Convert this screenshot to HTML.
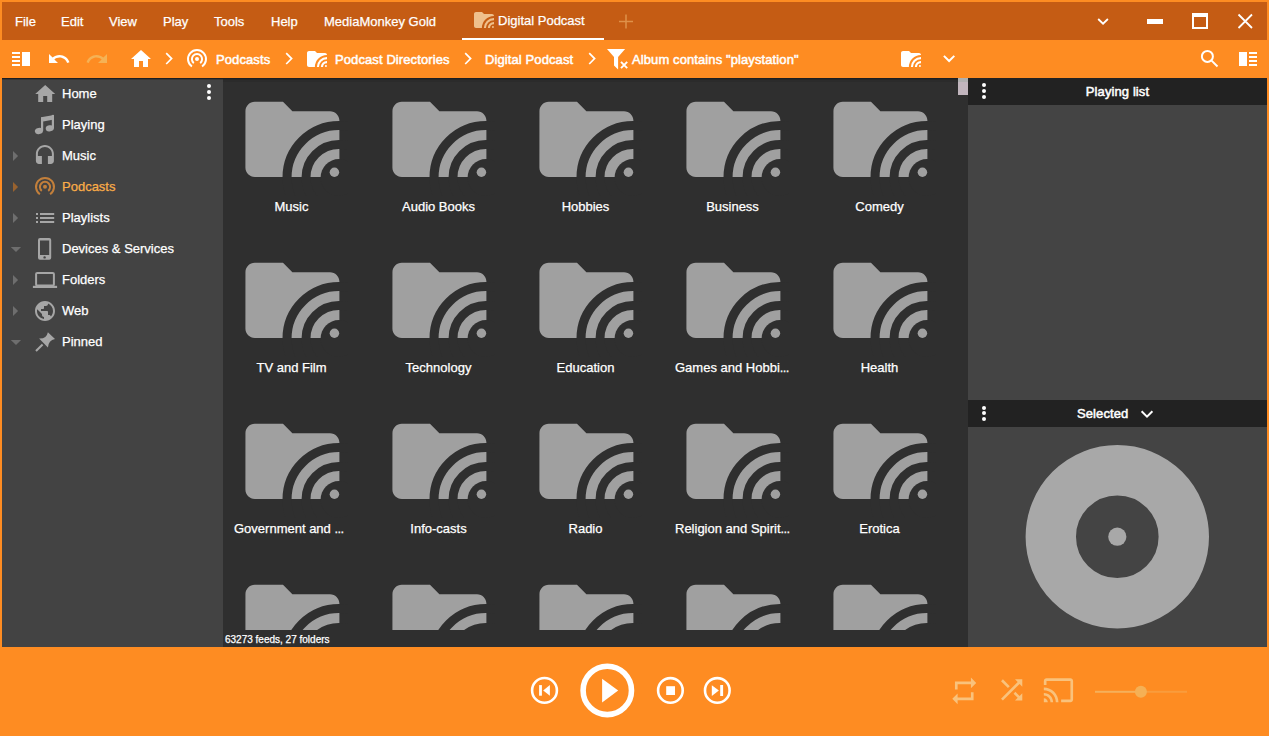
<!DOCTYPE html><html><head><meta charset="utf-8"><style>
*{margin:0;padding:0;box-sizing:border-box}
html,body{width:1269px;height:736px;overflow:hidden;background:#fe8c22;font-family:"Liberation Sans",sans-serif;color:#fff}
.a{position:absolute}
.menu,.nav,.lbl,.st{-webkit-text-stroke:0.25px currentColor}
svg{position:absolute;overflow:visible}
#title{left:2px;top:2px;width:1265px;height:38px;background:#c55c14}
.menu{position:absolute;top:12px;font-size:13px;line-height:15px;color:#fff;white-space:nowrap}
.tb{position:absolute;top:52px;font-size:13px;line-height:15px;letter-spacing:0.1px;-webkit-text-stroke:0.5px #fff;color:#fff;white-space:nowrap}
#left{left:2px;top:78px;width:221px;height:569px;background:#434343}
.nav{position:absolute;left:60px;font-size:13px;line-height:15px;color:#fff;white-space:nowrap}
#grid{left:223px;top:78px;width:745px;height:552px;background:#2f2f2f;overflow:hidden}
#status{left:223px;top:630px;width:745px;height:17px;background:#2f2f2f}
#right{left:968px;top:78px;width:299px;height:569px;background:#444}
.hdr{position:absolute;left:0;width:299px;height:27px;background:#222}
.item{position:absolute;width:147px;height:161px}
.item svg{left:12.6px;top:5px}
.lbl{position:absolute;left:-5px;width:147px;top:121px;text-align:center;font-size:13px;line-height:15px;color:#fff;white-space:nowrap}
</style></head><body>
<div id="title" class="a">
<div class="menu" style="left:13px">File</div>
<div class="menu" style="left:59px">Edit</div>
<div class="menu" style="left:107px">View</div>
<div class="menu" style="left:161px">Play</div>
<div class="menu" style="left:212px">Tools</div>
<div class="menu" style="left:269px">Help</div>
<div class="menu" style="left:322px">MediaMonkey Gold</div>
<svg style="left:470.3px;top:5.9px;overflow:hidden" width="24" height="24" viewBox="0 0 24 24"><path fill="#efc08c" d="M10 4H4c-1.1 0-1.99.9-1.99 2L2 18c0 1.1.9 2 2 2h16c1.1 0 2-.9 2-2V8c0-1.1-.9-2-2-2h-8l-2-2z"/><circle cx="21.91" cy="20.09" r="11.05" fill="none" stroke="#c55c14" stroke-width="1.93"/><circle cx="21.91" cy="20.09" r="7.01" fill="none" stroke="#c55c14" stroke-width="1.9"/><circle cx="21.91" cy="20.09" r="3.91" fill="#c55c14"/><circle cx="20.94" cy="18.99" r="1.01" fill="#efc08c"/></svg>
<div class="menu" style="left:496px;top:11px">Digital Podcast</div>
<div class="a" style="left:460px;top:36px;width:142px;height:2px;background:#fff"></div>
<svg style="left:615px;top:10px" width="20" height="20"><path d="M2 9.5H16M9 2.5V16.5" stroke="rgba(255,210,140,0.45)" stroke-width="1.5"/></svg>
<svg style="left:1088px;top:8px" width="20" height="16"><path d="M8.2 9 L13.05 13.7 L17.9 9" fill="none" stroke="#fff" stroke-width="1.8"/></svg>
<div class="a" style="left:1145px;top:16.5px;width:16px;height:5px;background:#fff"></div>
<div class="a" style="left:1190px;top:11px;width:16px;height:16px;border:2px solid #fff;border-top-width:4px"></div>
<svg style="left:1233px;top:9px" width="20" height="20"><path d="M3.5 3.5 L17 17 M17 3.5 L3.5 17" stroke="#fff" stroke-width="1.8"/></svg>
</div>
<div class="a" style="left:12px;top:52px;width:8px;height:2px;background:#fff"></div><div class="a" style="left:12px;top:56px;width:8px;height:2px;background:#fff"></div><div class="a" style="left:12px;top:60px;width:8px;height:2px;background:#fff"></div><div class="a" style="left:12px;top:64px;width:8px;height:2px;background:#fff"></div><div class="a" style="left:22px;top:52px;width:8px;height:14px;background:#fff"></div>
<svg style="left:47px;top:47px" width="24" height="24" viewBox="0 0 24 24"><path fill="#fff" d="M12.5 8c-2.65 0-5.05.99-6.9 2.6L2 7v9h9l-3.62-3.62c1.39-1.16 3.16-1.88 5.12-1.88 3.54 0 6.55 2.31 7.6 5.5l2.37-.78C21.08 11.03 17.15 8 12.5 8z"/></svg>
<svg style="left:84.8px;top:47px" width="24" height="24" viewBox="0 0 24 24"><path fill="#f5b255" d="M18.4 10.6C16.55 8.99 14.15 8 11.5 8c-4.65 0-8.58 3.03-9.96 7.22L3.9 16c1.05-3.19 4.05-5.5 7.6-5.5 1.95 0 3.73.72 5.12 1.88L13 16h9V7l-3.6 3.6z"/></svg>
<svg style="left:129px;top:47px" width="24" height="24" viewBox="0 0 24 24"><path fill="#fff" d="M10 20v-6h4v6h5v-8h3L12 3 2 12h3v8z"/></svg>
<svg style="left:165px;top:52px" width="10" height="14"><path d="M1.2 1.2 L6.6 6.6 L1.2 12" fill="none" stroke="#fff" stroke-width="1.7"/></svg>
<svg style="left:185px;top:47px" width="24" height="24" viewBox="0 0 24 24">
<path d="M6.9 19.5 A9 9 0 1 1 17.1 19.5" fill="none" stroke="#fff" stroke-width="2"/>
<path d="M8.8 16.1 A5.1 5.1 0 1 1 15.2 16.1" fill="none" stroke="#fff" stroke-width="2"/>
<circle cx="12" cy="12" r="2" fill="#fff"/></svg>
<div class="tb" style="left:216px">Podcasts</div>
<svg style="left:285px;top:52px" width="10" height="14"><path d="M1.2 1.2 L6.6 6.6 L1.2 12" fill="none" stroke="#fff" stroke-width="1.7"/></svg>
<svg style="left:305px;top:47px;overflow:hidden" width="24" height="24" viewBox="0 0 24 24"><path fill="#fff" d="M10 4H4c-1.1 0-1.99.9-1.99 2L2 18c0 1.1.9 2 2 2h16c1.1 0 2-.9 2-2V8c0-1.1-.9-2-2-2h-8l-2-2z"/><circle cx="21.91" cy="20.09" r="11.05" fill="none" stroke="#fe8c22" stroke-width="1.93"/><circle cx="21.91" cy="20.09" r="7.01" fill="none" stroke="#fe8c22" stroke-width="1.9"/><circle cx="21.91" cy="20.09" r="3.91" fill="#fe8c22"/><circle cx="20.94" cy="18.99" r="1.01" fill="#fff"/></svg>
<div class="tb" style="left:335px">Podcast Directories</div>
<svg style="left:464px;top:52px" width="10" height="14"><path d="M1.2 1.2 L6.6 6.6 L1.2 12" fill="none" stroke="#fff" stroke-width="1.7"/></svg>
<div class="tb" style="left:485px">Digital Podcast</div>
<svg style="left:588px;top:52px" width="10" height="14"><path d="M1.2 1.2 L6.6 6.6 L1.2 12" fill="none" stroke="#fff" stroke-width="1.7"/></svg>
<svg style="left:600px;top:44px" width="32" height="30"><path fill="#fff" d="M7 5H25.1L18.1 13V25.4L14 21.6V13Z"/><path d="M21 17.8L27.2 24.2M27.2 17.8L21 24.2" stroke="#fff" stroke-width="1.9"/></svg>
<div class="tb" style="left:632px">Album contains "playstation"</div>
<svg style="left:899px;top:47px;overflow:hidden" width="24" height="24" viewBox="0 0 24 24"><path fill="#fff" d="M10 4H4c-1.1 0-1.99.9-1.99 2L2 18c0 1.1.9 2 2 2h16c1.1 0 2-.9 2-2V8c0-1.1-.9-2-2-2h-8l-2-2z"/><circle cx="21.91" cy="20.09" r="11.05" fill="none" stroke="#fe8c22" stroke-width="1.93"/><circle cx="21.91" cy="20.09" r="7.01" fill="none" stroke="#fe8c22" stroke-width="1.9"/><circle cx="21.91" cy="20.09" r="3.91" fill="#fe8c22"/><circle cx="20.94" cy="18.99" r="1.01" fill="#fff"/></svg>
<svg style="left:940px;top:52px" width="18" height="14"><path d="M3.9 3.9 L9.1 9 L14.3 3.9" fill="none" stroke="#fff" stroke-width="2"/></svg>
<svg style="left:1198px;top:47px" width="24" height="24"><circle cx="9.4" cy="9.4" r="5.5" fill="none" stroke="#fff" stroke-width="2"/><path d="M13.6 13.6 L19.5 19.5" stroke="#fff" stroke-width="2"/></svg>
<div class="a" style="left:1239px;top:52px;width:8px;height:14px;background:#fff"></div><div class="a" style="left:1249px;top:52px;width:8px;height:2px;background:#fff"></div><div class="a" style="left:1249px;top:56px;width:8px;height:2px;background:#fff"></div><div class="a" style="left:1249px;top:60px;width:8px;height:2px;background:#fff"></div><div class="a" style="left:1249px;top:64px;width:8px;height:2px;background:#fff"></div>
<div id="left" class="a">
<div class="a" style="left:0;top:0;width:221px;height:1px;background:#1c1e22"></div><div class="a" style="left:0;top:1px;width:221px;height:1px;background:#353535"></div>
<div class="a" style="left:204.8px;top:5.8px;width:4.4px;height:4.4px;border-radius:50%;background:#fff"></div>
<div class="a" style="left:204.8px;top:11.8px;width:4.4px;height:4.4px;border-radius:50%;background:#fff"></div>
<div class="a" style="left:204.8px;top:17.8px;width:4.4px;height:4.4px;border-radius:50%;background:#fff"></div>
<div class="nav" style="top:8px;color:#fff">Home</div>
<div class="nav" style="top:39px;color:#fff">Playing</div>
<div class="nav" style="top:70px;color:#fff">Music</div>
<div class="nav" style="top:101px;color:#fbad48">Podcasts</div>
<div class="nav" style="top:132px;color:#fff">Playlists</div>
<div class="nav" style="top:163px;color:#fff">Devices &amp; Services</div>
<div class="nav" style="top:194px;color:#fff">Folders</div>
<div class="nav" style="top:225px;color:#fff">Web</div>
<div class="nav" style="top:256px;color:#fff">Pinned</div>
</div>
<svg style="left:0;top:0" width="223" height="360">
<path fill="#a6a6a6" transform="translate(33.2 81.9)" d="M10 20v-6h4v6h5v-8h3L12 3 2 12h3v8z"/>
<g fill="#a6a6a6">
 <path d="M41 117.3 L54 114.9 V119.5 L43.2 121.5 Z"/>
 <rect x="41" y="117.3" width="2.2" height="13.5"/>
 <rect x="51.8" y="114.9" width="2.2" height="13.5"/>
 <ellipse cx="38.9" cy="131" rx="4.1" ry="3" transform="rotate(-12 38.9 131)"/>
 <ellipse cx="49.8" cy="128.3" rx="4.1" ry="3" transform="rotate(-12 49.8 128.3)"/>
</g>
<path fill="#a6a6a6" transform="translate(32.9 143.9)" d="M12 1c-4.97 0-9 4.03-9 9v7c0 1.66 1.34 3 3 3h3v-8H5v-2c0-3.87 3.13-7 7-7s7 3.13 7 7v2h-4v8h3c1.66 0 3-1.34 3-3v-7c0-4.97-4.03-9-9-9z"/>
<g transform="translate(33 174.8)" stroke="#d98a3a" fill="none" stroke-width="2" opacity="0.85">
 <path d="M6.9 19.5 A9 9 0 1 1 17.1 19.5"/>
 <path d="M8.8 16.1 A5.1 5.1 0 1 1 15.2 16.1"/>
 <circle cx="12" cy="12" r="2" fill="#d98a3a" stroke="none"/>
</g>
<g fill="#a6a6a6">
 <rect x="36" y="213" width="2" height="2"/><rect x="40" y="213" width="14.2" height="2"/>
 <rect x="36" y="217" width="2" height="2"/><rect x="40" y="217" width="14.2" height="2"/>
 <rect x="36" y="221" width="2" height="2"/><rect x="40" y="221" width="14.2" height="2"/>
</g>
<path fill="#a6a6a6" fill-rule="evenodd" d="M40 238 H49.2 A2 2 0 0 1 51.2 240 V257.8 A2 2 0 0 1 49.2 259.8 H40 A2 2 0 0 1 38 257.8 V240 A2 2 0 0 1 40 238 Z M40 240.5 V255 H49.2 V240.5 Z"/>
<circle cx="44.6" cy="257.4" r="1.2" fill="#434343"/>
<rect x="36.1" y="272.9" width="17.8" height="12.7" rx="1.2" fill="none" stroke="#a6a6a6" stroke-width="2"/>
<rect x="32.9" y="285.8" width="24.2" height="2.2" fill="#a6a6a6"/>
<path fill="#a6a6a6" transform="translate(33 299)" d="M12 2C6.48 2 2 6.48 2 12s4.48 10 10 10 10-4.48 10-10S17.52 2 12 2zm-1 17.93c-3.950-.49-7-3.85-7-7.93 0-.62.08-1.21.21-1.79L9 15v1c0 1.1.9 2 2 2v1.93zm6.9-2.540c-.26-.81-1-1.39-1.9-1.39h-1v-3c0-.55-.45-1-1-1H8v-2h2c.55 0 1-.45 1-1V7h2c1.1 0 2-.9 2-2v-.41c2.93 1.19 5 4.06 5 7.41 0 2.08-.8 3.97-2.1 5.39z"/>
<path fill="#a6a6a6" d="M47.9 332.2 L55 339 Q48.5 340.4 47.9 347.4 L39.1 338.6 Q46.5 339 47.9 332.2 Z"/>
<path d="M42.6 344.6 L36 351" stroke="#a6a6a6" stroke-width="2.1"/>
<g fill="#6e6e6e">
 <path d="M13 151 L18.1 156 L13 161Z"/>
 <path d="M13 182 L18.1 187 L13 192Z" fill="#98622f"/>
 <path d="M13 213 L18.1 218 L13 223Z"/>
 <path d="M10.8 247 L21.1 247 L16 252Z"/>
 <path d="M13 275 L18.1 280 L13 285Z"/>
 <path d="M13 306 L18.1 311 L13 316Z"/>
 <path d="M10.8 340 L21.1 340 L16 345Z"/>
</g>
</svg>
<div id="grid" class="a">
<div class="a" style="left:0;top:0;width:745px;height:1px;background:#1c1e22"></div><div class="a" style="left:0;top:1px;width:745px;height:1px;background:#252525"></div><div class="a" style="left:0;top:2px;width:745px;height:2px;background:#2b2b2b"></div>
<div class="item" style="left:0px;top:0px"><svg style="left:12.6px;top:5px;overflow:hidden" width="112.8" height="112.8" viewBox="0 0 24 24"><path fill="#a0a0a0" d="M10 4H4c-1.1 0-1.99.9-1.99 2L2 18c0 1.1.9 2 2 2h16c1.1 0 2-.9 2-2V8c0-1.1-.9-2-2-2h-8l-2-2z"/><circle cx="21.91" cy="20.09" r="11.05" fill="none" stroke="#2f2f2f" stroke-width="1.93"/><circle cx="21.91" cy="20.09" r="7.01" fill="none" stroke="#2f2f2f" stroke-width="1.9"/><circle cx="21.91" cy="20.09" r="3.91" fill="#2f2f2f"/><circle cx="20.94" cy="18.99" r="1.01" fill="#a0a0a0"/></svg><div class="lbl">Music</div></div>
<div class="item" style="left:147px;top:0px"><svg style="left:12.6px;top:5px;overflow:hidden" width="112.8" height="112.8" viewBox="0 0 24 24"><path fill="#a0a0a0" d="M10 4H4c-1.1 0-1.99.9-1.99 2L2 18c0 1.1.9 2 2 2h16c1.1 0 2-.9 2-2V8c0-1.1-.9-2-2-2h-8l-2-2z"/><circle cx="21.91" cy="20.09" r="11.05" fill="none" stroke="#2f2f2f" stroke-width="1.93"/><circle cx="21.91" cy="20.09" r="7.01" fill="none" stroke="#2f2f2f" stroke-width="1.9"/><circle cx="21.91" cy="20.09" r="3.91" fill="#2f2f2f"/><circle cx="20.94" cy="18.99" r="1.01" fill="#a0a0a0"/></svg><div class="lbl">Audio Books</div></div>
<div class="item" style="left:294px;top:0px"><svg style="left:12.6px;top:5px;overflow:hidden" width="112.8" height="112.8" viewBox="0 0 24 24"><path fill="#a0a0a0" d="M10 4H4c-1.1 0-1.99.9-1.99 2L2 18c0 1.1.9 2 2 2h16c1.1 0 2-.9 2-2V8c0-1.1-.9-2-2-2h-8l-2-2z"/><circle cx="21.91" cy="20.09" r="11.05" fill="none" stroke="#2f2f2f" stroke-width="1.93"/><circle cx="21.91" cy="20.09" r="7.01" fill="none" stroke="#2f2f2f" stroke-width="1.9"/><circle cx="21.91" cy="20.09" r="3.91" fill="#2f2f2f"/><circle cx="20.94" cy="18.99" r="1.01" fill="#a0a0a0"/></svg><div class="lbl">Hobbies</div></div>
<div class="item" style="left:441px;top:0px"><svg style="left:12.6px;top:5px;overflow:hidden" width="112.8" height="112.8" viewBox="0 0 24 24"><path fill="#a0a0a0" d="M10 4H4c-1.1 0-1.99.9-1.99 2L2 18c0 1.1.9 2 2 2h16c1.1 0 2-.9 2-2V8c0-1.1-.9-2-2-2h-8l-2-2z"/><circle cx="21.91" cy="20.09" r="11.05" fill="none" stroke="#2f2f2f" stroke-width="1.93"/><circle cx="21.91" cy="20.09" r="7.01" fill="none" stroke="#2f2f2f" stroke-width="1.9"/><circle cx="21.91" cy="20.09" r="3.91" fill="#2f2f2f"/><circle cx="20.94" cy="18.99" r="1.01" fill="#a0a0a0"/></svg><div class="lbl">Business</div></div>
<div class="item" style="left:588px;top:0px"><svg style="left:12.6px;top:5px;overflow:hidden" width="112.8" height="112.8" viewBox="0 0 24 24"><path fill="#a0a0a0" d="M10 4H4c-1.1 0-1.99.9-1.99 2L2 18c0 1.1.9 2 2 2h16c1.1 0 2-.9 2-2V8c0-1.1-.9-2-2-2h-8l-2-2z"/><circle cx="21.91" cy="20.09" r="11.05" fill="none" stroke="#2f2f2f" stroke-width="1.93"/><circle cx="21.91" cy="20.09" r="7.01" fill="none" stroke="#2f2f2f" stroke-width="1.9"/><circle cx="21.91" cy="20.09" r="3.91" fill="#2f2f2f"/><circle cx="20.94" cy="18.99" r="1.01" fill="#a0a0a0"/></svg><div class="lbl">Comedy</div></div>
<div class="item" style="left:0px;top:161px"><svg style="left:12.6px;top:5px;overflow:hidden" width="112.8" height="112.8" viewBox="0 0 24 24"><path fill="#a0a0a0" d="M10 4H4c-1.1 0-1.99.9-1.99 2L2 18c0 1.1.9 2 2 2h16c1.1 0 2-.9 2-2V8c0-1.1-.9-2-2-2h-8l-2-2z"/><circle cx="21.91" cy="20.09" r="11.05" fill="none" stroke="#2f2f2f" stroke-width="1.93"/><circle cx="21.91" cy="20.09" r="7.01" fill="none" stroke="#2f2f2f" stroke-width="1.9"/><circle cx="21.91" cy="20.09" r="3.91" fill="#2f2f2f"/><circle cx="20.94" cy="18.99" r="1.01" fill="#a0a0a0"/></svg><div class="lbl">TV and Film</div></div>
<div class="item" style="left:147px;top:161px"><svg style="left:12.6px;top:5px;overflow:hidden" width="112.8" height="112.8" viewBox="0 0 24 24"><path fill="#a0a0a0" d="M10 4H4c-1.1 0-1.99.9-1.99 2L2 18c0 1.1.9 2 2 2h16c1.1 0 2-.9 2-2V8c0-1.1-.9-2-2-2h-8l-2-2z"/><circle cx="21.91" cy="20.09" r="11.05" fill="none" stroke="#2f2f2f" stroke-width="1.93"/><circle cx="21.91" cy="20.09" r="7.01" fill="none" stroke="#2f2f2f" stroke-width="1.9"/><circle cx="21.91" cy="20.09" r="3.91" fill="#2f2f2f"/><circle cx="20.94" cy="18.99" r="1.01" fill="#a0a0a0"/></svg><div class="lbl">Technology</div></div>
<div class="item" style="left:294px;top:161px"><svg style="left:12.6px;top:5px;overflow:hidden" width="112.8" height="112.8" viewBox="0 0 24 24"><path fill="#a0a0a0" d="M10 4H4c-1.1 0-1.99.9-1.99 2L2 18c0 1.1.9 2 2 2h16c1.1 0 2-.9 2-2V8c0-1.1-.9-2-2-2h-8l-2-2z"/><circle cx="21.91" cy="20.09" r="11.05" fill="none" stroke="#2f2f2f" stroke-width="1.93"/><circle cx="21.91" cy="20.09" r="7.01" fill="none" stroke="#2f2f2f" stroke-width="1.9"/><circle cx="21.91" cy="20.09" r="3.91" fill="#2f2f2f"/><circle cx="20.94" cy="18.99" r="1.01" fill="#a0a0a0"/></svg><div class="lbl">Education</div></div>
<div class="item" style="left:441px;top:161px"><svg style="left:12.6px;top:5px;overflow:hidden" width="112.8" height="112.8" viewBox="0 0 24 24"><path fill="#a0a0a0" d="M10 4H4c-1.1 0-1.99.9-1.99 2L2 18c0 1.1.9 2 2 2h16c1.1 0 2-.9 2-2V8c0-1.1-.9-2-2-2h-8l-2-2z"/><circle cx="21.91" cy="20.09" r="11.05" fill="none" stroke="#2f2f2f" stroke-width="1.93"/><circle cx="21.91" cy="20.09" r="7.01" fill="none" stroke="#2f2f2f" stroke-width="1.9"/><circle cx="21.91" cy="20.09" r="3.91" fill="#2f2f2f"/><circle cx="20.94" cy="18.99" r="1.01" fill="#a0a0a0"/></svg><div class="lbl" style="left:11px;width:auto;text-align:left">Games and Hobbi<span style='letter-spacing:-0.6px'>...</span></div></div>
<div class="item" style="left:588px;top:161px"><svg style="left:12.6px;top:5px;overflow:hidden" width="112.8" height="112.8" viewBox="0 0 24 24"><path fill="#a0a0a0" d="M10 4H4c-1.1 0-1.99.9-1.99 2L2 18c0 1.1.9 2 2 2h16c1.1 0 2-.9 2-2V8c0-1.1-.9-2-2-2h-8l-2-2z"/><circle cx="21.91" cy="20.09" r="11.05" fill="none" stroke="#2f2f2f" stroke-width="1.93"/><circle cx="21.91" cy="20.09" r="7.01" fill="none" stroke="#2f2f2f" stroke-width="1.9"/><circle cx="21.91" cy="20.09" r="3.91" fill="#2f2f2f"/><circle cx="20.94" cy="18.99" r="1.01" fill="#a0a0a0"/></svg><div class="lbl">Health</div></div>
<div class="item" style="left:0px;top:322px"><svg style="left:12.6px;top:5px;overflow:hidden" width="112.8" height="112.8" viewBox="0 0 24 24"><path fill="#a0a0a0" d="M10 4H4c-1.1 0-1.99.9-1.99 2L2 18c0 1.1.9 2 2 2h16c1.1 0 2-.9 2-2V8c0-1.1-.9-2-2-2h-8l-2-2z"/><circle cx="21.91" cy="20.09" r="11.05" fill="none" stroke="#2f2f2f" stroke-width="1.93"/><circle cx="21.91" cy="20.09" r="7.01" fill="none" stroke="#2f2f2f" stroke-width="1.9"/><circle cx="21.91" cy="20.09" r="3.91" fill="#2f2f2f"/><circle cx="20.94" cy="18.99" r="1.01" fill="#a0a0a0"/></svg><div class="lbl" style="left:11px;width:auto;text-align:left">Government and <span style='letter-spacing:-0.6px'>...</span></div></div>
<div class="item" style="left:147px;top:322px"><svg style="left:12.6px;top:5px;overflow:hidden" width="112.8" height="112.8" viewBox="0 0 24 24"><path fill="#a0a0a0" d="M10 4H4c-1.1 0-1.99.9-1.99 2L2 18c0 1.1.9 2 2 2h16c1.1 0 2-.9 2-2V8c0-1.1-.9-2-2-2h-8l-2-2z"/><circle cx="21.91" cy="20.09" r="11.05" fill="none" stroke="#2f2f2f" stroke-width="1.93"/><circle cx="21.91" cy="20.09" r="7.01" fill="none" stroke="#2f2f2f" stroke-width="1.9"/><circle cx="21.91" cy="20.09" r="3.91" fill="#2f2f2f"/><circle cx="20.94" cy="18.99" r="1.01" fill="#a0a0a0"/></svg><div class="lbl">Info-casts</div></div>
<div class="item" style="left:294px;top:322px"><svg style="left:12.6px;top:5px;overflow:hidden" width="112.8" height="112.8" viewBox="0 0 24 24"><path fill="#a0a0a0" d="M10 4H4c-1.1 0-1.99.9-1.99 2L2 18c0 1.1.9 2 2 2h16c1.1 0 2-.9 2-2V8c0-1.1-.9-2-2-2h-8l-2-2z"/><circle cx="21.91" cy="20.09" r="11.05" fill="none" stroke="#2f2f2f" stroke-width="1.93"/><circle cx="21.91" cy="20.09" r="7.01" fill="none" stroke="#2f2f2f" stroke-width="1.9"/><circle cx="21.91" cy="20.09" r="3.91" fill="#2f2f2f"/><circle cx="20.94" cy="18.99" r="1.01" fill="#a0a0a0"/></svg><div class="lbl">Radio</div></div>
<div class="item" style="left:441px;top:322px"><svg style="left:12.6px;top:5px;overflow:hidden" width="112.8" height="112.8" viewBox="0 0 24 24"><path fill="#a0a0a0" d="M10 4H4c-1.1 0-1.99.9-1.99 2L2 18c0 1.1.9 2 2 2h16c1.1 0 2-.9 2-2V8c0-1.1-.9-2-2-2h-8l-2-2z"/><circle cx="21.91" cy="20.09" r="11.05" fill="none" stroke="#2f2f2f" stroke-width="1.93"/><circle cx="21.91" cy="20.09" r="7.01" fill="none" stroke="#2f2f2f" stroke-width="1.9"/><circle cx="21.91" cy="20.09" r="3.91" fill="#2f2f2f"/><circle cx="20.94" cy="18.99" r="1.01" fill="#a0a0a0"/></svg><div class="lbl" style="left:11px;width:auto;text-align:left">Religion and Spirit<span style='letter-spacing:-0.6px'>...</span></div></div>
<div class="item" style="left:588px;top:322px"><svg style="left:12.6px;top:5px;overflow:hidden" width="112.8" height="112.8" viewBox="0 0 24 24"><path fill="#a0a0a0" d="M10 4H4c-1.1 0-1.99.9-1.99 2L2 18c0 1.1.9 2 2 2h16c1.1 0 2-.9 2-2V8c0-1.1-.9-2-2-2h-8l-2-2z"/><circle cx="21.91" cy="20.09" r="11.05" fill="none" stroke="#2f2f2f" stroke-width="1.93"/><circle cx="21.91" cy="20.09" r="7.01" fill="none" stroke="#2f2f2f" stroke-width="1.9"/><circle cx="21.91" cy="20.09" r="3.91" fill="#2f2f2f"/><circle cx="20.94" cy="18.99" r="1.01" fill="#a0a0a0"/></svg><div class="lbl">Erotica</div></div>
<div class="item" style="left:0px;top:483px"><svg style="left:12.6px;top:5px;overflow:hidden" width="112.8" height="112.8" viewBox="0 0 24 24"><path fill="#a0a0a0" d="M10 4H4c-1.1 0-1.99.9-1.99 2L2 18c0 1.1.9 2 2 2h16c1.1 0 2-.9 2-2V8c0-1.1-.9-2-2-2h-8l-2-2z"/><circle cx="21.91" cy="20.09" r="11.05" fill="none" stroke="#2f2f2f" stroke-width="1.93"/><circle cx="21.91" cy="20.09" r="7.01" fill="none" stroke="#2f2f2f" stroke-width="1.9"/><circle cx="21.91" cy="20.09" r="3.91" fill="#2f2f2f"/><circle cx="20.94" cy="18.99" r="1.01" fill="#a0a0a0"/></svg></div>
<div class="item" style="left:147px;top:483px"><svg style="left:12.6px;top:5px;overflow:hidden" width="112.8" height="112.8" viewBox="0 0 24 24"><path fill="#a0a0a0" d="M10 4H4c-1.1 0-1.99.9-1.99 2L2 18c0 1.1.9 2 2 2h16c1.1 0 2-.9 2-2V8c0-1.1-.9-2-2-2h-8l-2-2z"/><circle cx="21.91" cy="20.09" r="11.05" fill="none" stroke="#2f2f2f" stroke-width="1.93"/><circle cx="21.91" cy="20.09" r="7.01" fill="none" stroke="#2f2f2f" stroke-width="1.9"/><circle cx="21.91" cy="20.09" r="3.91" fill="#2f2f2f"/><circle cx="20.94" cy="18.99" r="1.01" fill="#a0a0a0"/></svg></div>
<div class="item" style="left:294px;top:483px"><svg style="left:12.6px;top:5px;overflow:hidden" width="112.8" height="112.8" viewBox="0 0 24 24"><path fill="#a0a0a0" d="M10 4H4c-1.1 0-1.99.9-1.99 2L2 18c0 1.1.9 2 2 2h16c1.1 0 2-.9 2-2V8c0-1.1-.9-2-2-2h-8l-2-2z"/><circle cx="21.91" cy="20.09" r="11.05" fill="none" stroke="#2f2f2f" stroke-width="1.93"/><circle cx="21.91" cy="20.09" r="7.01" fill="none" stroke="#2f2f2f" stroke-width="1.9"/><circle cx="21.91" cy="20.09" r="3.91" fill="#2f2f2f"/><circle cx="20.94" cy="18.99" r="1.01" fill="#a0a0a0"/></svg></div>
<div class="item" style="left:441px;top:483px"><svg style="left:12.6px;top:5px;overflow:hidden" width="112.8" height="112.8" viewBox="0 0 24 24"><path fill="#a0a0a0" d="M10 4H4c-1.1 0-1.99.9-1.99 2L2 18c0 1.1.9 2 2 2h16c1.1 0 2-.9 2-2V8c0-1.1-.9-2-2-2h-8l-2-2z"/><circle cx="21.91" cy="20.09" r="11.05" fill="none" stroke="#2f2f2f" stroke-width="1.93"/><circle cx="21.91" cy="20.09" r="7.01" fill="none" stroke="#2f2f2f" stroke-width="1.9"/><circle cx="21.91" cy="20.09" r="3.91" fill="#2f2f2f"/><circle cx="20.94" cy="18.99" r="1.01" fill="#a0a0a0"/></svg></div>
<div class="item" style="left:588px;top:483px"><svg style="left:12.6px;top:5px;overflow:hidden" width="112.8" height="112.8" viewBox="0 0 24 24"><path fill="#a0a0a0" d="M10 4H4c-1.1 0-1.99.9-1.99 2L2 18c0 1.1.9 2 2 2h16c1.1 0 2-.9 2-2V8c0-1.1-.9-2-2-2h-8l-2-2z"/><circle cx="21.91" cy="20.09" r="11.05" fill="none" stroke="#2f2f2f" stroke-width="1.93"/><circle cx="21.91" cy="20.09" r="7.01" fill="none" stroke="#2f2f2f" stroke-width="1.9"/><circle cx="21.91" cy="20.09" r="3.91" fill="#2f2f2f"/><circle cx="20.94" cy="18.99" r="1.01" fill="#a0a0a0"/></svg></div>
<div class="a" style="left:735px;top:0;width:10px;height:17px;background:#c1b5bd"></div><div class="a" style="left:735px;top:0;width:10px;height:4px;background:#b0b0b0"></div>
</div>
<div id="status" class="a"><div class="a st" style="left:2px;top:4px;font-size:10px;line-height:12px;color:#fff;white-space:nowrap">63273 feeds, 27 folders</div></div>
<div id="right" class="a">
<div class="hdr" style="top:0"></div>
<div class="hdr" style="top:322px"></div>
<div class="a" style="left:13.8px;top:5.4px;width:4px;height:4px;border-radius:50%;background:#fff"></div>
<div class="a" style="left:13.8px;top:11.4px;width:4px;height:4px;border-radius:50%;background:#fff"></div>
<div class="a" style="left:13.8px;top:17.4px;width:4px;height:4px;border-radius:50%;background:#fff"></div>
<div class="a" style="left:13.8px;top:327.5px;width:4px;height:4px;border-radius:50%;background:#fff"></div>
<div class="a" style="left:13.8px;top:333.3px;width:4px;height:4px;border-radius:50%;background:#fff"></div>
<div class="a" style="left:13.8px;top:339.3px;width:4px;height:4px;border-radius:50%;background:#fff"></div>
<div class="a" style="left:0;top:6px;width:299px;text-align:center;font-size:13px;line-height:15px;letter-spacing:0.1px;-webkit-text-stroke:0.5px #fff">Playing list</div>
<div class="a" style="left:109px;top:328px;font-size:13px;line-height:15px;letter-spacing:0.1px;-webkit-text-stroke:0.5px #fff">Selected</div>
<svg style="left:170px;top:331px" width="16" height="10"><path d="M3.6 2.3 L9 7.6 L14.4 2.3" fill="none" stroke="#fff" stroke-width="2"/></svg>
<svg style="left:0;top:0" width="299" height="569"><circle cx="149.3" cy="458.7" r="66.5" fill="none" stroke="#a8a8a8" stroke-width="50.4"/><circle cx="149.3" cy="458.7" r="9.1" fill="#a8a8a8"/></svg>
</div>
<svg style="left:0;top:647px" width="1269" height="89">
<g transform="translate(0 -647)">
<circle cx="544.5" cy="690.4" r="12.4" fill="none" stroke="#fff" stroke-width="2.6"/>
<rect x="539.1" y="685.1" width="2.8" height="10.6" fill="#fff"/>
<path d="M543.2 690.4 L549.9 685.1 V695.7Z" fill="#fff"/>
<circle cx="607.3" cy="690.4" r="24.2" fill="none" stroke="#fff" stroke-width="5.6"/>
<path d="M602.1 678.7 L618.2 690.4 L602.1 702.6Z" fill="#fff"/>
<circle cx="670.4" cy="690.4" r="12.3" fill="none" stroke="#fff" stroke-width="2.6"/>
<rect x="666.2" y="686.2" width="8.8" height="8.8" fill="#fff"/>
<circle cx="717.3" cy="690.4" r="12.3" fill="none" stroke="#fff" stroke-width="2.6"/>
<path d="M711.8 685.3 L718.9 690.6 L711.8 695.9Z" fill="#fff"/>
<rect x="720.2" y="685" width="2.9" height="11" fill="#fff"/>
<g fill="#f9c27c">
<path transform="translate(948.3 674.9) scale(1.33)" d="M7 7h10v3l4-4-4-4v3H5v6h2V7zm10 10H7v-3l-4 4 4 4v-3h12v-6h-2v4z"/>
<path transform="translate(995.7 674) scale(1.33)" d="M10.59 9.17L5.41 4 4 5.41l5.17 5.170 1.42-1.41zM14.5 4l2.04 2.04L4 18.59 5.41 20 17.96 7.46 20 9.5V4h-5.5zm.33 9.41l-1.41 1.41 3.13 3.13L14.5 20H20v-5.5l-2.04 2.04-3.13-3.13z"/>
<path transform="translate(1042.5 674.3) scale(1.33)" d="M21 3H3c-1.1 0-2 .9-2 2v3h2V5h18v14h-7v2h7c1.1 0 2-.9 2-2V5c0-1.1-.9-2-2-2zM1 18v3h3c0-1.66-1.34-3-3-3zm0-4v2c2.76 0 5 2.24 5 5h2c0-3.870-3.13-7-7-7zm0-4v2c4.97 0 9 4.03 9 9h2c0-6.08-4.93-11-11-11z"/>
</g>
<rect x="1095" y="690.8" width="46" height="2" fill="#f5b05a"/>
<rect x="1141" y="690.8" width="46" height="2" fill="#f99c3c"/>
<circle cx="1140.9" cy="691.8" r="6" fill="#f5b055"/>
</g></svg>
</body></html>
